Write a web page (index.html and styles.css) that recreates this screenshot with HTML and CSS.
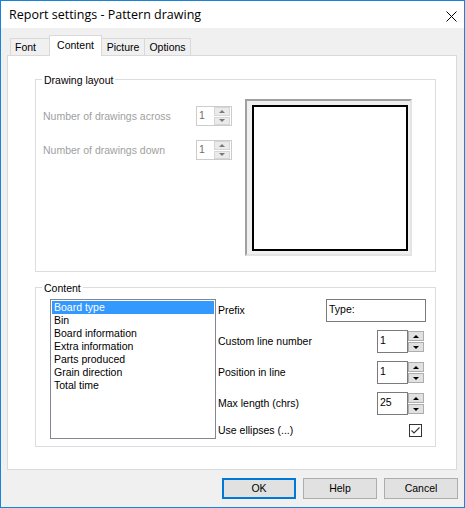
FILE: index.html
```html
<!DOCTYPE html>
<html>
<head>
<meta charset="utf-8">
<link rel="stylesheet" href="styles.css">
</head>
<body>
<div class="window">
  <div class="titlebar">
    <span class="title">Report settings - Pattern drawing</span>
    <svg class="close" viewBox="0 0 11 11" width="11" height="11"><path d="M0.5 0.5 L10.5 10.5 M10.5 0.5 L0.5 10.5" stroke="#000" stroke-width="1" fill="none"/></svg>
  </div>
  <div class="main">
    <div class="tabs">
      <div class="tab tab-font">Font</div>
      <div class="tab tab-content">Content</div>
      <div class="tab tab-picture">Picture</div>
      <div class="tab tab-options">Options</div>
    </div>
    <div class="panel">
      <div class="group group-layout">
        <div class="group-title">Drawing layout</div>
        <div class="layout-row">
          <div class="layout-fields">
            <div class="field">
              <span class="label disabled">Number of drawings across</span>
              <div class="spin spin-small">
                <div class="spin-field">1</div>
                <div class="spin-btns">
                  <div class="spin-btn"><span class="arrow-up"></span></div>
                  <div class="spin-btn"><span class="arrow-down"></span></div>
                </div>
              </div>
            </div>
            <div class="field">
              <span class="label disabled">Number of drawings down</span>
              <div class="spin spin-small">
                <div class="spin-field">1</div>
                <div class="spin-btns">
                  <div class="spin-btn"><span class="arrow-up"></span></div>
                  <div class="spin-btn"><span class="arrow-down"></span></div>
                </div>
              </div>
            </div>
          </div>
          <div class="preview"><div class="preview-inner"></div></div>
        </div>
      </div>
      <div class="group group-content">
        <div class="group-title">Content</div>
        <div class="content-row">
          <ul class="listbox">
            <li class="selected">Board type</li>
            <li>Bin</li>
            <li>Board information</li>
            <li>Extra information</li>
            <li>Parts produced</li>
            <li>Grain direction</li>
            <li>Total time</li>
          </ul>
          <div class="props">
            <div class="prop-row">
              <span class="label">Prefix</span>
              <div class="textbox">Type:</div>
            </div>
            <div class="prop-row">
              <span class="label">Custom line number</span>
              <div class="spin spin-large">
                <div class="spin-field">1</div>
                <div class="spin-btns">
                  <div class="spin-btn"><span class="arrow-up"></span></div>
                  <div class="spin-btn"><span class="arrow-down"></span></div>
                </div>
              </div>
            </div>
            <div class="prop-row">
              <span class="label">Position in line</span>
              <div class="spin spin-large">
                <div class="spin-field">1</div>
                <div class="spin-btns">
                  <div class="spin-btn"><span class="arrow-up"></span></div>
                  <div class="spin-btn"><span class="arrow-down"></span></div>
                </div>
              </div>
            </div>
            <div class="prop-row">
              <span class="label">Max length (chrs)</span>
              <div class="spin spin-large">
                <div class="spin-field">25</div>
                <div class="spin-btns">
                  <div class="spin-btn"><span class="arrow-up"></span></div>
                  <div class="spin-btn"><span class="arrow-down"></span></div>
                </div>
              </div>
            </div>
            <div class="prop-row prop-check">
              <span class="label">Use ellipses (...)</span>
              <div class="checkbox"><svg viewBox="0 0 11 11" width="11" height="11"><path d="M1.5 5.5 L4 8 L9.5 2.5" stroke="#333" stroke-width="1.1" fill="none"/></svg></div>
            </div>
          </div>
        </div>
      </div>
    </div>
    <div class="buttons">
      <button class="btn btn-default">OK</button>
      <button class="btn">Help</button>
      <button class="btn">Cancel</button>
    </div>
  </div>
</div>
</body>
</html>
```
FILE: styles.css
```css
* { box-sizing: border-box; }
html, body { margin: 0; padding: 0; background: #fff; }
body {
  font-family: "Liberation Sans", Arial, sans-serif;
  font-size: 10.5px;
  line-height: 13px;
  color: #000;
}
.window {
  width: 465px;
  height: 508px;
  border: 1px solid #1883d7;
  background: #f0f0f0;
  display: flex;
  flex-direction: column;
}
.titlebar {
  height: 27px;
  flex: none;
  background: #fff;
  display: flex;
  justify-content: space-between;
  align-items: flex-start;
  padding-left: 8px;
}
.title {
  font-family: "Open Sans", "Noto Sans", sans-serif;
  font-size: 12.5px;
  line-height: 27px;
  color: #000;
}
.close { margin: 10px 7px 0 0; display: block; }
.main { padding: 7px 0 0 6px; }
.tabs {
  display: flex;
  align-items: flex-end;
  height: 20px;
  padding-left: 3px;
}
.tab {
  height: 17px;
  border-top: 1px solid #d9d9d9;
  padding-top: 1px;
  line-height: 15px;
  text-align: center;
  background: #f0f0f0;
  white-space: nowrap;
}
.tab-font { width: 39px; border-left: 1px solid #d9d9d9; text-align: left; padding-left: 4px; }
.tab-content {
  width: 53px;
  height: 21px;
  margin-bottom: -1px;
  border: 1px solid #d9d9d9;
  border-bottom: none;
  background: #fff;
  position: relative;
  z-index: 1;
  padding-top: 2px;
}
.tab-picture { width: 43px; border-right: 1px solid #d9d9d9; }
.tab-options { width: 46px; border-right: 1px solid #d9d9d9; }
.panel {
  width: 450px;
  height: 415px;
  border: 1px solid #d9d9d9;
  background: #fff;
  padding: 23px 0 0 27px;
}
.group {
  width: 401px;
  border: 1px solid #dcdcdc;
}
.group-layout { height: 193px; }
.group-content { height: 160px; margin-top: 15px; }
.group-title {
  display: table;
  margin: -6px 0 0 6px;
  padding: 0 2px;
  background: #fff;
  line-height: 13px;
}
.layout-row { display: flex; padding-left: 7px; }
.layout-fields {
  width: 202px;
  padding-top: 19px;
  display: flex;
  flex-direction: column;
  gap: 14px;
}
.field { display: flex; align-items: center; height: 20px; }
.field .label { width: 153px; white-space: nowrap; }
.disabled { color: #a0a0a0; }
.spin { display: flex; background: #fff; }
.spin-field { flex: 1; padding: 3px 0 0 2px; }
.spin-btns { display: flex; flex-direction: column; gap: 1px; }
.spin-btn { flex: 1; display: flex; align-items: center; justify-content: center; }
.arrow-up, .arrow-down {
  width: 0; height: 0;
  border-left: 3px solid transparent;
  border-right: 3px solid transparent;
}
.arrow-up { border-bottom: 3px solid #000; }
.arrow-down { border-top: 3px solid #000; }
.spin-small {
  width: 36px;
  height: 20px;
  border: 1px solid #cccccc;
}
.spin-small .spin-field { color: #6d6d6d; padding-top: 2px; }
.spin-small .spin-btns { width: 17px; padding: 0 1px 0 0; }
.spin-small .spin-btn { background: #eaeaea; border: 1px solid #d6d6d6; }
.spin-small .arrow-up { border-bottom-color: #7a7a7a; }
.spin-small .arrow-down { border-top-color: #7a7a7a; }
.spin-large {
  width: 47px;
  height: 23px;
  margin-right: 2px;
}
.spin-large .spin-field { border: 1px solid #7a7a7a; }
.spin-large .spin-btns { width: 16px; padding: 1px 0; }
.spin-large .spin-btn { background: #e1e1e1; border: 1px solid #adadad; }
.preview {
  margin-top: 12px;
  width: 167px;
  height: 157px;
  border-top: 2px solid #a0a0a0;
  border-left: 2px solid #a0a0a0;
  border-right: 2px solid #e3e3e3;
  border-bottom: 2px solid #e3e3e3;
  background: #f0f0f0;
  padding: 4px 2px 3px 5px;
}
.preview-inner {
  width: 156px;
  height: 146px;
  border: 2px solid #000;
  background: #fff;
}
.content-row { display: flex; padding: 4px 0 0 14px; }
.listbox {
  list-style: none;
  margin: 0;
  width: 166px;
  height: 140px;
  border: 1px solid #828790;
  padding: 1px;
  background: #fff;
}
.listbox li { height: 13px; line-height: 13px; padding-left: 2px; white-space: nowrap; }
.listbox li.selected { background: #3399ff; color: #fff; }
.props {
  width: 208px;
  margin-left: 2px;
  display: flex;
  flex-direction: column;
}
.prop-row {
  display: flex;
  align-items: center;
  justify-content: space-between;
  height: 23px;
  margin-bottom: 8px;
}
.prop-row .label { white-space: nowrap; }
.prop-check { height: 13px; margin: 1px 0 0 0; }
.textbox {
  width: 100px;
  height: 23px;
  border: 1px solid #7a7a7a;
  padding: 3px 0 0 2px;
  background: #fff;
}
.checkbox {
  width: 13px;
  height: 13px;
  border: 1px solid #333;
  background: #fff;
  margin-right: 4px;
}
.checkbox svg { display: block; }
.buttons {
  display: flex;
  justify-content: flex-end;
  gap: 7px;
  padding: 8px 6px 0 0;
}
.btn {
  width: 74px;
  height: 21px;
  margin: 0;
  padding: 0;
  border: 1px solid #adadad;
  background: #e1e1e1;
  font-family: "Liberation Sans", Arial, sans-serif;
  font-size: 10.5px;
  line-height: 19px;
  color: #000;
  text-align: center;
}
.btn-default { border: 2px solid #0078d7; line-height: 17px; }
```
